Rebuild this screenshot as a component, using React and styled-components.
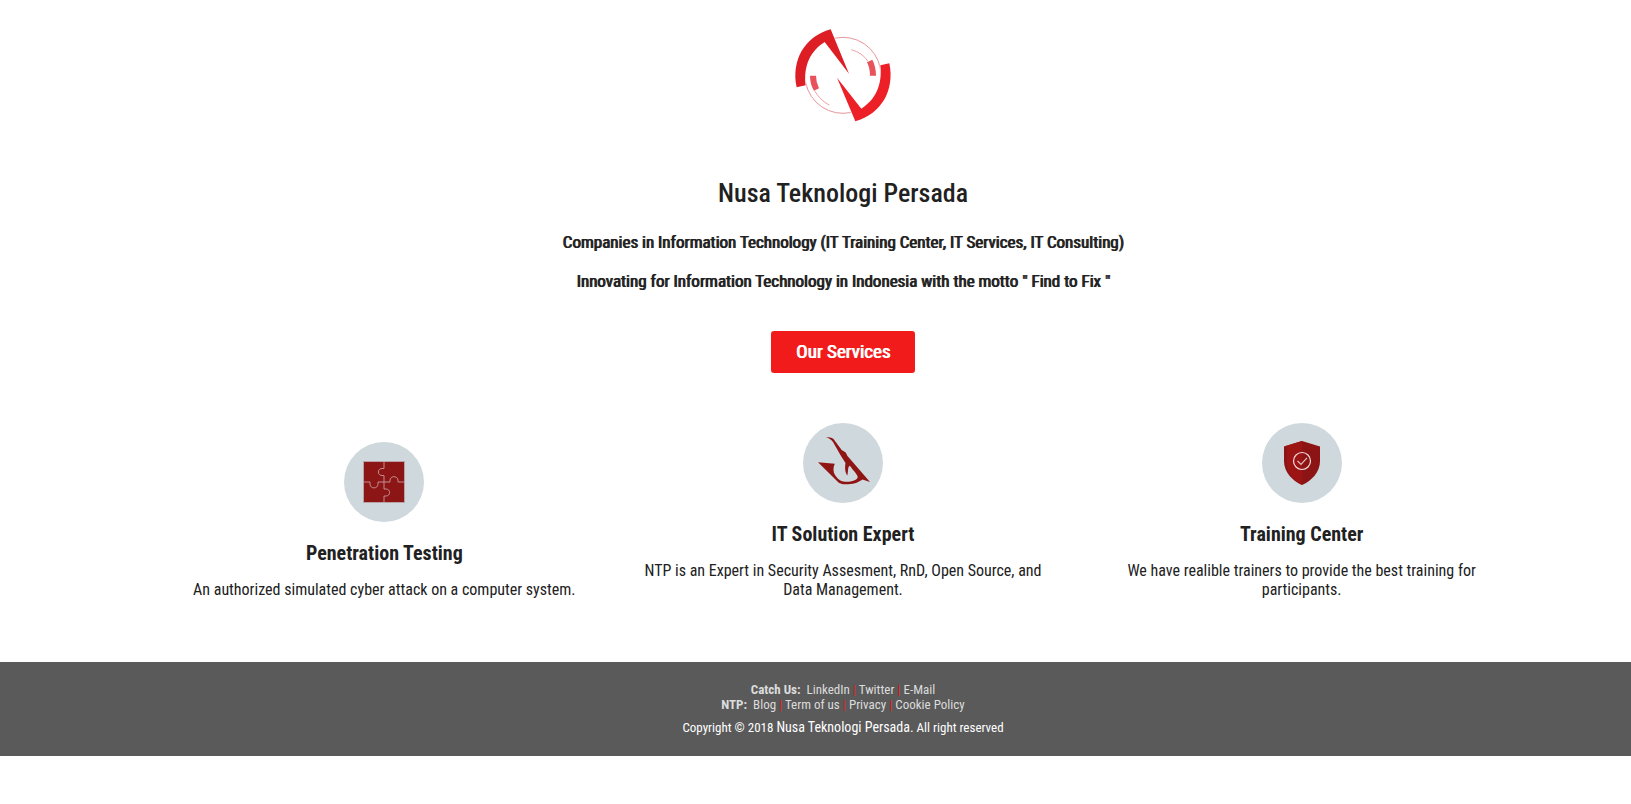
import React from "react";
import styled, { createGlobalStyle } from "styled-components";

const GlobalStyle = createGlobalStyle`
  *, *::before, *::after { box-sizing: border-box; }
  body {
    margin: 0;
    background: #fff;
    color: #212121;
    font-family: "Roboto Condensed", "Liberation Sans Narrow", Roboto, sans-serif;
    font-size: 16px;
    line-height: 19px;
  }
`;

const Page = styled.div`
  text-align: center;
`;

const Main = styled.main`
  padding: 24px 100px 63px 155px;
`;

const Hero = styled.header`
  display: flex;
  flex-direction: column;
  align-items: center;
`;

const Logo = styled.svg`
  width: 126px;
  height: 110px;
`;

const Title = styled.h1`
  margin: 44px 0 24px;
  font-size: 26px;
  line-height: 30px;
  font-weight: 500;
`;

const Tagline = styled.p`
  margin: 0 0 19px;
  font-size: 17px;
  line-height: 20px;
  font-weight: 400;
  text-shadow: 1px 0 0 currentColor;
`;

const ServicesButton = styled.button`
  margin: 21px 0 50px;
  height: 42px;
  padding: 0 25px 2px;
  border: 0;
  border-radius: 3px;
  background: #f21b1b;
  color: #fff;
  font-family: inherit;
  font-size: 19px;
  font-weight: 400;
  text-shadow: 1px 0 0 currentColor;
  cursor: pointer;
`;

const ServiceGrid = styled.section`
  display: grid;
  grid-template-columns: repeat(3, 1fr);
  align-items: end;
`;

const Service = styled.article`
  padding: 0 28px;
  display: flex;
  flex-direction: column;
  align-items: center;
`;

const ServiceIcon = styled.svg`
  width: 80px;
  height: 80px;
`;

const ServiceName = styled.h2`
  margin: 19px 0 15px;
  font-size: 20px;
  line-height: 24px;
  font-weight: 700;
`;

const ServiceText = styled.p`
  margin: 0;
`;

const Footer = styled.footer`
  padding: 20px 100px 20px 155px;
  background: #5a5a5a;
  color: #fff;
  font-size: 13px;
  line-height: 15px;
`;

const LinkRow = styled.nav`
  color: #dcdcdc;
`;

const LinkLabel = styled.b`
  margin-right: 6px;
`;

const FooterLink = styled.a`
  color: inherit;
  text-decoration: none;
`;

const Divider = styled.span`
  color: #e01b1b;
`;

const Copyright = styled.p`
  margin: 7px 0 0;
  line-height: 17px;
`;

const Company = styled.span`
  font-size: 14px;
`;

const PuzzleIcon = () => (
  <ServiceIcon viewBox="0 0 80 80" aria-hidden="true">
    <circle cx="40" cy="40" r="40" fill="#cfd8dd" />
    <rect x="19.5" y="19.5" width="41" height="41" fill="#8c1616" stroke="#b9a3a6" />
    <g fill="none" stroke="#cfa9ac" strokeWidth="0.8">
      <path d="M40 19.5V26.5H38C33.200 26.500 33.200 33.500 38 33.500H40V47H42C46.800 47 46.800 54 42 54H40V60.500" />
      <path d="M19.500 40H26V42C26 47.200 34 47.200 34 42V40H46V38.500C46 33.400 54 33.400 54 38.500V40H60.500" />
    </g>
  </ServiceIcon>
);

const BladeIcon = () => (
  <ServiceIcon viewBox="0 0 80 80" aria-hidden="true">
    <circle cx="40" cy="40" r="40" fill="#cfd8dd" />
    <path
      fill="#8f1414"
      d="M23 14C26 14.200 28.500 14.500 30.500 16L38.700 27L42.700 29.500L44.500 33L67 59L59.500 56.500C55 59 53 61 45 61.300C39 61.500 36.500 60.500 34.500 58.500L15 39.300L31.800 40.700C30 44 30 49 32 52C35 56.500 38 58.500 42 58.700C48 59 54.700 57.500 54.700 53.700C54 51 50 47 46.800 42.700C44.500 44 45.500 47.500 44.300 52.500C42.500 50 41.500 46 42.500 40L38 33L30 19C28 16 26 15.500 23 14Z"
    />
  </ServiceIcon>
);

const ShieldIcon = () => (
  <ServiceIcon viewBox="0 0 80 80" aria-hidden="true">
    <circle cx="40" cy="40" r="40" fill="#cfd8dd" />
    <path fill="#8c1414" d="M40 18L58 23.500V38C58 49 50 57.500 40 62C30 57.500 22 49 22 38V23.500Z" />
    <path fill="#9c1414" d="M40 18V62C34 58 26 52 25 43V25L22 23.500Z" />
    <circle cx="40" cy="38" r="8.500" fill="none" stroke="#f1dede" strokeWidth="1.200" />
    <path d="M35.500 38L39 41.500L45 34.800" fill="none" stroke="#e3bcbc" strokeWidth="1.200" />
  </ServiceIcon>
);

const services = [
  { name: "Penetration Testing", text: "An authorized simulated cyber attack on a computer system.", Icon: PuzzleIcon },
  { name: "IT Solution Expert", text: "NTP is an Expert in Security Assesment, RnD, Open Source, and Data Management.", Icon: BladeIcon },
  { name: "Training Center", text: "We have realible trainers to provide the best training for participants.", Icon: ShieldIcon },
];

const footerLinks = [
  { label: "Catch Us:", links: ["LinkedIn", "Twitter", "E-Mail"] },
  { label: "NTP:", links: ["Blog", "Term of us", "Privacy", "Cookie Policy"] },
];

export default function App() {
  return (
    <Page>
      <GlobalStyle />
      <Main>
        <Hero>
          <Logo viewBox="0 0 378 330" role="img" aria-label="Nusa Teknologi Persada">
            <circle cx="189" cy="154" r="114" fill="none" stroke="#e8959b" strokeWidth="3" />
            <g fill="#fff" stroke="#fff" strokeWidth="4">
              <path d="M48 190C32 110 75 37 152 17L207 149L134 54C92 80 70 125 77 184Z" />
              <path d="M330 118C346 198 303 271 226 292L171 161L244 254C286 228 308 183 301 124Z" />
            </g>
            <path fill="#dd1e25" d="M50 190C33 110 74 37 152 16L207 149L134 54C92 80 70 125 77 184Z" />
            <path fill="#ed1f27" d="M328 118C345 198 304 271 226 292L171 161L244 254C286 228 308 183 301 124Z" />
            <path fill="#e8525b" d="M261 115L277 107Q288 128 288 155H270Q270 132 261 115Z" />
            <path fill="#e8525b" d="M90 155H108Q108 175 117 193L102 200Q90 181 90 155Z" />
            <path fill="none" stroke="#e88c92" strokeWidth="2.500" d="M214 77Q247 86 264 112M103 199Q119 228 148 243" />
          </Logo>
          <Title>Nusa Teknologi Persada</Title>
          <Tagline>Companies in Information Technology (IT Training Center, IT Services, IT Consulting)</Tagline>
          <Tagline>Innovating for Information Technology in Indonesia with the motto " Find to Fix "</Tagline>
          <ServicesButton type="button">Our Services</ServicesButton>
        </Hero>
        <ServiceGrid>
          {services.map(({ name, text, Icon }) => (
            <Service key={name}>
              <Icon />
              <ServiceName>{name}</ServiceName>
              <ServiceText>{text}</ServiceText>
            </Service>
          ))}
        </ServiceGrid>
      </Main>
      <Footer>
        {footerLinks.map(({ label, links }) => (
          <LinkRow key={label} aria-label={label}>
            <LinkLabel>{label}</LinkLabel>
            {links.map((link, i) => (
              <React.Fragment key={link}>
                {i > 0 && <Divider> | </Divider>}
                <FooterLink href="#">{link}</FooterLink>
              </React.Fragment>
            ))}
          </LinkRow>
        ))}
        <Copyright>
          Copyright © 2018 <Company>Nusa Teknologi Persada.</Company> All right reserved
        </Copyright>
      </Footer>
    </Page>
  );
}
